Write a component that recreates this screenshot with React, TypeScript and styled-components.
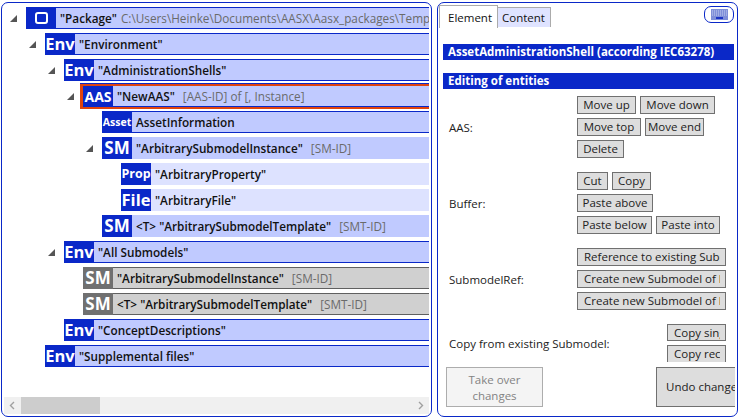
import React from "react";
import styled, { createGlobalStyle } from "styled-components";

const Global = createGlobalStyle`
  html, body { margin: 0; padding: 0; background: #fff; }
  body { font-family: "Open Sans", "Noto Sans", sans-serif; font-size: 11.5px; color: #222; }
  * { box-sizing: border-box; }
`;

const Page = styled.div`
  width: 740px; height: 420px; padding: 2px 2px 3px 1px;
  display: flex; gap: 5px; overflow: hidden;
`;
const Panel = styled.div<{ $w: number }>`
  width: ${p => p.$w}px; flex: none; height: 415px;
  border: 1px solid #0a28c8; border-radius: 7px; overflow: hidden;
  display: flex; flex-direction: column;
`;
const Tree = styled.div`
  flex: 1; min-height: 0; padding: 4px 2px 0 0; display: flex; flex-direction: column; gap: 4px; overflow: hidden;
`;
const Row = styled.div<{ $x: number }>`
  height: 22px; flex: none; display: flex; padding-left: ${p => p.$x}px;
`;
const Arrow = styled.span`
  width: 0; height: 0; flex: none; align-self: center; margin-left: -16px; margin-right: 9px;
  border-left: 7px solid transparent; border-bottom: 7px solid #555;
`;
const Entity = styled.div<{ $sel?: boolean }>`
  flex: 1; min-width: 0; display: flex; height: 22px; align-self: flex-start;
  ${p => p.$sel && `
    height: 25px; margin: -1px 0 0 -3px;
    border-top: 2px solid #e0440e; border-bottom: 2px solid #e0440e; border-left: 3px solid #e0440e;
    box-shadow: 0 -1px 0 #0a28c8;
  `}
`;
const Badge = styled.div<{ $grey?: boolean; $size: number }>`
  width: 30px; flex: none; display: flex; align-items: center; justify-content: center;
  background: ${p => (p.$grey ? "#707070" : "#0a28c8")}; color: #fff; font-weight: 700;
  font-size: ${p => p.$size}px; line-height: 22px; font-family: "Open Sans", sans-serif; overflow: hidden;
`;
const Body = styled.div<{ $tone: string; $sel?: boolean }>`
  flex: 1; min-width: 0; display: flex; align-items: center; padding-left: 4px; white-space: pre; overflow: hidden;
  ${p => p.$tone === "deep" && `background:#c0caff; border-top:1px solid #0a28c8; border-bottom:1px solid #0a28c8;`}
  ${p => p.$tone === "mid" && `background:#c0caff;`}
  ${p => p.$tone === "pale" && `background:#dde2ff;`}
  ${p => p.$tone === "grey" && `background:#d0d0d0; border-top:1px solid #606060; border-bottom:1px solid #606060;`}
  ${p => p.$sel && `border-top: 0;`}
`;
const Name = styled.span` font-weight: 600; color: #111; font-size: 11.75px; `;
const Info = styled.span<{ $gap: number }>` color: #6a6a6a; font-size: 11.75px; margin-left: ${p => p.$gap}px; `;
const Square = styled.span` width: 13px; height: 12px; border: 2px solid #fff; border-radius: 3px; `;

const HBar = styled.div`
  flex: none; margin: 0 2px 2px 2px; height: 17px; background: #f0f0f0;
  display: flex; align-items: center;
`;
const Thumb = styled.div` width: 79px; height: 17px; background: #cdcdcd; margin-right: auto; `;

const Tabs = styled.div` display: flex; flex: none; padding: 0 3px 0 1px; height: 25px; align-items: flex-end; `;
const Tab = styled.div<{ $on?: boolean }>`
  height: ${p => (p.$on ? 23 : 20)}px; display: flex; align-items: center; padding: ${p => (p.$on ? "0 8px" : "0 4px")};
  width: ${p => (p.$on ? 59 : 53)}px; font-size: 11.5px; color: #111; flex: none; white-space: nowrap;
  background: ${p => (p.$on ? "#fff" : "#dfe3ff")};
  border: 1px solid #ababab; border-bottom: 0;
  ${p => !p.$on && "border-left: 0; margin-bottom: 1px;"}
`;
const KeyButton = styled.div`
  margin-left: auto; align-self: flex-start; margin-top: 3px; width: 30px; height: 17px; border: 1px solid #0a28c8; border-radius: 7px;
  display: flex; align-items: center; justify-content: center; background: #fff;
`;
const Banner = styled.div<{ $top: number }>`
  height: 16px; margin: ${p => p.$top}px 3px 0 5px; padding-left: 5px; background: #0a28c8; color: #fff; font-weight: 700;
  font-size: 11.5px; line-height: 16px; white-space: nowrap; overflow: hidden; flex: none;
`;
const Section = styled.div<{ $top: number; $h?: number }>`
  display: grid; grid-template-columns: 128px 1fr; padding: 0 11px; margin-top: ${p => p.$top}px; flex: none;
  ${p => p.$h && `height: ${p.$h}px; overflow: hidden;`}
`;
const Label = styled.div` font-size: 11.5px; color: #222; align-self: center; white-space: nowrap; `;
const Group = styled.div<{ $end?: boolean }>`
  display: flex; flex-direction: column; gap: 4px; min-width: 0;
  ${p => p.$end && "align-items: flex-end;"}
`;
const Line = styled.div` display: flex; gap: 4px; `;
const Btn = styled.div<{ $w: number; $cut?: boolean; $h?: number }>`
  width: ${p => p.$w}px; height: ${p => p.$h ?? 18}px; flex: none; border: 1px solid #707070; background: #ddd;
  font-size: 11.5px; line-height: 16px; color: #222; white-space: nowrap;
  ${p => (p.$cut ? "padding: 0 5px 0 6px;" : "text-align: center;")}
`;
const Clip = styled.span` display: block; overflow: hidden; `;
const Footer = styled.div`
  flex: none; margin: 5px 2px 0 8px; height: 40px; display: flex; justify-content: space-between;
`;
const Take = styled.div`
  width: 97px; border: 1px solid #adadad; background: #f4f4f4; color: #838383; font-size: 11.5px;
  text-align: center; line-height: 16px; padding-top: 4px;
`;
const Undo = styled.div`
  width: 79px; border: 1px solid #707070; border-right: 0; background: #ddd; color: #222; font-size: 11.5px;
  white-space: nowrap; padding-left: 9px; line-height: 38px; overflow: hidden;
`;

type Item = { x: number; badge: React.ReactNode; size: number; tone: string; name: string; info?: string; gap?: number; arrow?: boolean; grey?: boolean; sel?: boolean };
const items: Item[] = [
  { x: 24, badge: <Square />, size: 17, tone: "deep", name: '"Package"', info: "C:\\Users\\Heinke\\Documents\\AASX\\Aasx_packages\\Template", gap: 4, arrow: true },
  { x: 43, badge: "Env", size: 16.5, tone: "deep", name: '"Environment"', arrow: true },
  { x: 62, badge: "Env", size: 16.5, tone: "deep", name: '"AdministrationShells"', arrow: true },
  { x: 81, badge: "AAS", size: 14, tone: "deep", name: '"NewAAS"', info: "[AAS-ID] of [, Instance]", arrow: true, sel: true },
  { x: 100, badge: "Asset", size: 10.5, tone: "deep", name: "AssetInformation" },
  { x: 100, badge: "SM", size: 17, tone: "mid", name: '"ArbitrarySubmodelInstance"', info: "[SM-ID]", arrow: true },
  { x: 119, badge: "Prop", size: 12.5, tone: "pale", name: '"ArbitraryProperty"' },
  { x: 119, badge: "File", size: 16.5, tone: "pale", name: '"ArbitraryFile"' },
  { x: 100, badge: "SM", size: 17, tone: "mid", name: '<T> "ArbitrarySubmodelTemplate"', info: "[SMT-ID]" },
  { x: 62, badge: "Env", size: 16.5, tone: "deep", name: '"All Submodels"', arrow: true },
  { x: 81, badge: "SM", size: 17, tone: "grey", grey: true, name: '"ArbitrarySubmodelInstance"', info: "[SM-ID]" },
  { x: 81, badge: "SM", size: 17, tone: "grey", grey: true, name: '<T> "ArbitrarySubmodelTemplate"', info: "[SMT-ID]" },
  { x: 62, badge: "Env", size: 16.5, tone: "deep", name: '"ConceptDescriptions"' },
  { x: 43, badge: "Env", size: 16.5, tone: "deep", name: '"Supplemental files"' },
];

export default function App() {
  return (
    <Page>
      <Global />
      <Panel $w={431}>
        <Tree>
          {items.map((it, i) => (
            <Row key={i} $x={it.x}>
              {it.arrow && <Arrow />}
              <Entity $sel={it.sel}>
                <Badge $grey={it.grey} $size={it.size}>{it.badge}</Badge>
                <Body $tone={it.tone} $sel={it.sel}>
                  <Name>{it.name}</Name>
                  {it.info && <Info $gap={it.gap ?? 8}>{it.info}</Info>}
                </Body>
              </Entity>
            </Row>
          ))}
        </Tree>
        <HBar>
          <svg width="17" height="17" viewBox="0 0 17 17"><path d="M10 5 L6.5 8.5 L10 12" fill="none" stroke="#a0a0a0" strokeWidth="1.4" /></svg>
          <Thumb />
          <svg width="17" height="17" viewBox="0 0 17 17"><path d="M7 5 L10.5 8.5 L7 12" fill="none" stroke="#a0a0a0" strokeWidth="1.4" /></svg>
        </HBar>
      </Panel>
      <Panel $w={301}>
        <Tabs>
          <Tab $on>Element</Tab>
          <Tab>Content</Tab>
          <KeyButton>
            <svg width="17" height="11" viewBox="0 0 17 11">
              <rect x="0" y="0" width="17" height="11" fill="#7f8fd8" />
              <path d="M1 2h15M1 4h15M1 6h15" stroke="#c7cff0" strokeWidth="1" strokeDasharray="1 1" />
              <rect x="5" y="8" width="7" height="2" fill="#1c34c4" />
            </svg>
          </KeyButton>
        </Tabs>
        <Banner $top={16}>AssetAdministrationShell (according IEC63278)</Banner>
        <Banner $top={13}>Editing of entities</Banner>
        <Section $top={7}>
          <Label>AAS:</Label>
          <Group>
            <Line><Btn $w={59}>Move up</Btn><Btn $w={75}>Move down</Btn></Line>
            <Line><Btn $w={64}>Move top</Btn><Btn $w={59}>Move end</Btn></Line>
            <Line><Btn $w={47}>Delete</Btn></Line>
          </Group>
        </Section>
        <Section $top={14}>
          <Label>Buffer:</Label>
          <Group>
            <Line><Btn $w={31}>Cut</Btn><Btn $w={39}>Copy</Btn></Line>
            <Line><Btn $w={76}>Paste above</Btn></Line>
            <Line><Btn $w={75}>Paste below</Btn><Btn $w={64}>Paste into</Btn></Line>
          </Group>
        </Section>
        <Section $top={14}>
          <Label>SubmodelRef:</Label>
          <Group>
            <Btn $w={149} $cut><Clip>Reference to existing Submodel</Clip></Btn>
            <Btn $w={149} $cut><Clip>Create new Submodel of kind Type</Clip></Btn>
            <Btn $w={149} $cut><Clip>Create new Submodel of kind Instance</Clip></Btn>
          </Group>
        </Section>
        <Section $top={14} $h={38}>
          <Label>Copy from existing Submodel:</Label>
          <Group $end>
            <Btn $w={59} $h={17} $cut><Clip>Copy single entity</Clip></Btn>
            <Btn $w={59} $h={18} $cut><Clip>Copy recursively</Clip></Btn>
          </Group>
        </Section>
        <Footer>
          <Take>Take over<br />changes</Take>
          <Undo>Undo changes</Undo>
        </Footer>
      </Panel>
    </Page>
  );
}
